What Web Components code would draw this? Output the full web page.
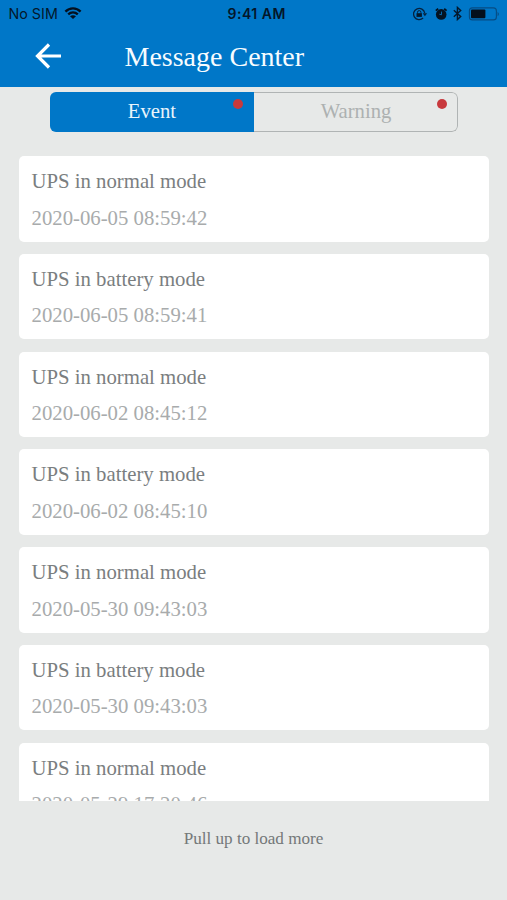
<!DOCTYPE html>
<html lang="en">
<head>
<meta charset="utf-8">
<title>Message Center</title>
<style>
html,body{margin:0;height:100%;background:#e7e9e8}
body{font-family:"Liberation Serif","Times New Roman",serif;overflow:hidden}
</style>
</head>
<body>
<message-app></message-app>
<script>
const define = (name, html) => {
  const t = document.createElement('template');
  t.innerHTML = html;
  customElements.define(name, class extends HTMLElement {
    constructor() {
      super();
      this.attachShadow({ mode: 'open' }).append(t.content.cloneNode(true));
    }
  });
};

define('status-bar', `
<style>
:host{display:grid;grid-template-columns:1fr auto 1fr;align-items:center;height:28px;box-sizing:border-box;padding:0 7px 0 8.5px;font:14.3px/28px Inter,"Liberation Sans",sans-serif;color:#04182c}
.left,.right{display:flex;align-items:center}
.left{gap:6.5px}
.right{justify-content:flex-end}
.time{font-weight:600;font-size:14px;color:#04162a;letter-spacing:.5px;margin-left:5px}
svg{display:block}
.left svg{margin-top:-2px}
.right svg{position:relative;top:-.5px}
.alarm{margin-left:6.5px}.bt{margin-left:5.5px}.bat{margin-left:6px}
</style>
<div class="left"><span>No SIM</span>
<svg width="18" height="14" viewBox="0 0 18 14" fill="none" stroke="#04101f" stroke-width="2.3"><path d="M1.4 5.6C5.7 1.2 12.3 1.2 16.6 5.6M4.2 8.4C7 5.8 11 5.8 13.8 8.4"/><path d="M9 13 6 10.3Q9 8.1 12 10.3Z" fill="#04101f" stroke="none"/></svg></div>
<div class="time">9:41 AM</div>
<div class="right">
<svg width="15" height="14" viewBox="0 0 15 14" fill="none" stroke="#04223f" stroke-width="1.3"><path d="M10.1 11A5.6 5.6 0 1 1 11.7 6"/><path d="M9.7 6.2h4.4l-2.2 3z" fill="#04223f" stroke="none"/><path d="M4.5 6.5V5.3a1.7 1.7 0 0 1 3.4 0v1.2" stroke-width="1"/><path d="M3.5 6.2h5.4v3.7H3.5z" fill="#04182c" stroke="none"/></svg>
<svg class="alarm" width="13" height="14" viewBox="0 0 13 14"><circle cx="6.2" cy="7.4" r="5.3" fill="#041322"/><path d="M.8 3.6 3.2 1.7M11.6 3.6 9.2 1.7" fill="none" stroke="#041322" stroke-width="1.8"/><path d="M6.5 4.6V7.8L4.3 7.2" fill="none" stroke="#0768ac" stroke-width="1"/></svg>
<svg class="bt" width="9" height="15" viewBox="0 0 9 15" fill="none" stroke="#04182c" stroke-width="1.4"><path d="M.8 4.3 7.7 10.5 4.4 13.6V1.4L7.7 4.5.8 10.7"/></svg>
<svg class="bat" width="32" height="14" viewBox="0 0 32 14"><rect x="1.4" y=".9" width="27" height="12" rx="3" fill="none" stroke="#064c83" stroke-width="1.1"/><rect x="3" y="2.6" width="14.4" height="8.6" rx="1" fill="#040f1c"/><path d="M29.6 4.7q2.6 2.3 0 4.6z" fill="#064c83"/></svg>
</div>`);

define('title-bar', `
<style>
:host{display:flex;align-items:flex-start;height:59px;padding:0 0 0 35px;box-sizing:border-box;color:#f7fcff}
svg{display:block;flex:none;margin-top:14.5px}
h1{margin:0 0 0 62.5px;font-size:28px;font-weight:400;line-height:57px}
</style>
<svg width="27" height="26" viewBox="0 0 27 26" fill="none" stroke="#fff" stroke-width="3.2"><path d="M14 1.5 2.5 13 14 24.5M2.5 13H26"/></svg>
<h1><slot></slot></h1>`);

define('tab-item', `
<style>
:host{display:flex;flex:1;position:relative;align-items:center;justify-content:center;font-size:20.7px;color:#adb1b1}
:host([selected]){background:#0077c8;color:#e9f5fc}
i{position:absolute;right:11px;top:7px;width:10px;height:10px;border-radius:50%;background:#c8393d}
</style>
<slot></slot><i></i>`);

define('tab-group', `
<style>
:host{display:flex;box-sizing:border-box;width:408px;height:40px;margin:4.5px 0 0 50px;border-radius:6px;overflow:hidden;position:relative}
:host::before{content:"";position:absolute;inset:0 0 0 204px;border:1.5px solid #b0b4b4;border-left:0;border-radius:0 6px 6px 0}
</style>
<slot></slot>`);

define('message-card', `
<style>
:host{display:block;flex:none;box-sizing:border-box;height:85.5px;padding:13px 12.5px 0;border-radius:5px;background:#fff;font-size:20.75px;line-height:25px;color:#7a7e80}
.date{margin-top:11.5px;color:#a8abac}
</style>
<div><slot></slot></div><div class="date"><slot name="date"></slot></div>`);

define('message-list', `
<style>
:host{display:flex;flex-direction:column;gap:12.25px;height:645px;overflow:hidden;margin:24.5px 18px 0 19px}
</style>
<slot></slot>`);

define('load-more', `
<style>
:host{display:block;margin-top:28px;text-align:center;font-size:17.1px;line-height:20px;color:#747879}
</style>
<slot></slot>`);

define('message-app', `
<style>
:host{display:block;height:900px;background:#e7e9e8}
header{background:#0077c8}
</style>
<header><status-bar></status-bar><title-bar>Message Center</title-bar></header>
<tab-group><tab-item selected>Event</tab-item><tab-item>Warning</tab-item></tab-group>
<message-list>
<message-card>UPS in normal mode<span slot="date">2020-06-05 08:59:42</span></message-card>
<message-card>UPS in battery mode<span slot="date">2020-06-05 08:59:41</span></message-card>
<message-card>UPS in normal mode<span slot="date">2020-06-02 08:45:12</span></message-card>
<message-card>UPS in battery mode<span slot="date">2020-06-02 08:45:10</span></message-card>
<message-card>UPS in normal mode<span slot="date">2020-05-30 09:43:03</span></message-card>
<message-card>UPS in battery mode<span slot="date">2020-05-30 09:43:03</span></message-card>
<message-card>UPS in normal mode<span slot="date">2020-05-29 17:20:46</span></message-card>
</message-list>
<load-more>Pull up to load more</load-more>`);
</script>
</body>
</html>
